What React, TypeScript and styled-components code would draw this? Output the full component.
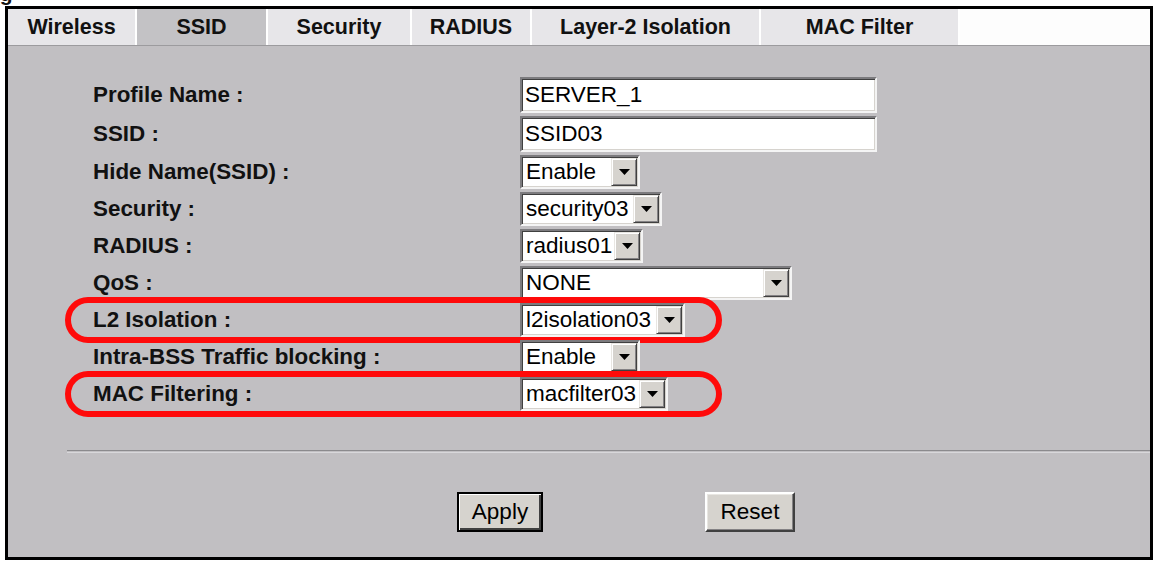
import React from 'react';
import styled, { createGlobalStyle, css } from 'styled-components';

const GlobalStyle = createGlobalStyle`
  html, body {
    margin: 0;
    padding: 0;
    background: #ffffff;
    font-family: 'Liberation Sans', Arial, sans-serif;
  }
`;

const Caption = styled.div`
  height: 6px;
  overflow: hidden;
  font: bold 21px/21px 'Liberation Sans', Arial, sans-serif;
  color: #111;
`;

const CaptionText = styled.div`
  margin: -17px 0 0 -19px;
  white-space: nowrap;
`;

const Frame = styled.div`
  box-sizing: border-box;
  margin-left: 5px;
  width: 1148px;
  height: 554px;
  border: 3px solid #000;
  display: flex;
  flex-direction: column;
  background: #c1bfc2;
`;

const TabBar = styled.div`
  display: flex;
  height: 36px;
  border-bottom: 1px solid #9c9b9e;
  background: #fdfdfd;
`;

const Tab = styled.div<{ $width: number; $active?: boolean }>`
  box-sizing: border-box;
  width: ${(p) => p.$width}px;
  display: flex;
  align-items: center;
  justify-content: center;
  border-right: 2px solid #ffffff;
  background: ${(p) => (p.$active ? '#c3c2c5' : '#e7e6e9')};
  font: bold 21.5px 'Liberation Sans', Arial, sans-serif;
  color: #111;
  white-space: nowrap;
`;

const Panel = styled.div`
  flex: 1;
  display: flex;
  flex-direction: column;
`;

const Form = styled.div`
  display: flex;
  flex-direction: column;
  gap: 3px;
  padding: 31px 0 0 85px;
`;

const highlight = css`
  &::after {
    content: '';
    position: absolute;
    left: -28px;
    top: -6px;
    width: 657px;
    height: 46px;
    box-sizing: border-box;
    border: 6px solid #ff0a0a;
    border-radius: 23px;
    pointer-events: none;
  }
`;

const Row = styled.div<{ $marked?: boolean }>`
  position: relative;
  display: grid;
  grid-template-columns: 427px auto;
  align-items: center;
  ${(p) => p.$marked && highlight}
`;

const Label = styled.div`
  font: bold 22.4px 'Liberation Sans', Arial, sans-serif;
  color: #111;
  white-space: nowrap;
`;

const TextField = styled.input`
  box-sizing: border-box;
  width: 357px;
  height: 36px;
  margin: 0;
  padding: 0 3px;
  border: 2px solid;
  border-color: #7c7b7e #f4f4f4 #f4f4f4 #7c7b7e;
  box-shadow: inset 1px 1px 0 #404040, inset -1px -1px 0 #d6d3ce;
  background: #fff;
  font: 22.5px 'Liberation Sans', Arial, sans-serif;
  color: #000;
  outline: none;
`;

const SelectBox = styled.div<{ $width: number }>`
  box-sizing: border-box;
  width: ${(p) => p.$width}px;
  height: 34px;
  display: flex;
  align-items: stretch;
  border: 2px solid;
  border-color: #7c7b7e #f4f4f4 #f4f4f4 #7c7b7e;
  box-shadow: inset 1px 1px 0 #404040, inset -1px -1px 0 #d6d3ce;
  background: #fff;
  padding: 1px;
`;

const SelectText = styled.div`
  flex: 1;
  display: flex;
  align-items: center;
  padding-left: 3px;
  font: 22.5px 'Liberation Sans', Arial, sans-serif;
  color: #000;
  white-space: nowrap;
  overflow: hidden;
`;

const ArrowButton = styled.div`
  box-sizing: border-box;
  width: 26px;
  display: flex;
  align-items: center;
  justify-content: center;
  background: #d6d3ce;
  border: 1px solid;
  border-color: #e8e6e2 #404040 #404040 #e8e6e2;
  box-shadow: inset 1px 1px 0 #ffffff, inset -1px -1px 0 #848284;
`;

const Divider = styled.div`
  margin: 39px 0 0 59px;
  height: 1px;
  border-top: 1px solid #8b8a8d;
  border-bottom: 1px solid #d8d7da;
`;

const ButtonRow = styled.div`
  display: flex;
  gap: 162px;
  padding: 39px 0 0 449px;
`;

const Button = styled.button<{ $width: number; $default?: boolean }>`
  box-sizing: border-box;
  width: ${(p) => p.$width}px;
  height: 40px;
  margin: 0;
  padding: 0;
  background: #d6d3ce;
  border: 2px solid;
  border-color: #ffffff #404040 #404040 #ffffff;
  box-shadow: inset -1px -1px 0 #848284, inset 1px 1px 0 #e8e6e2;
  font: 22.5px 'Liberation Sans', Arial, sans-serif;
  color: #000;
  ${(p) =>
    p.$default &&
    css`
      border: 2px solid #000;
      box-shadow: inset 1px 1px 0 #ffffff, inset -2px -2px 0 #404040;
    `}
`;

const Select: React.FC<{ width: number; value: string }> = ({ width, value }) => (
  <SelectBox $width={width}>
    <SelectText>{value}</SelectText>
    <ArrowButton>
      <svg width="11" height="6" viewBox="0 0 11 6">
        <polygon points="0,0 11,0 5.5,6" fill="#000" />
      </svg>
    </ArrowButton>
  </SelectBox>
);

const tabs = [
  { label: 'Wireless', width: 129 },
  { label: 'SSID', width: 131, active: true },
  { label: 'Security', width: 144 },
  { label: 'RADIUS', width: 120 },
  { label: 'Layer-2 Isolation', width: 229 },
  { label: 'MAC Filter', width: 199 },
];

const selects = [
  { label: 'Hide Name(SSID) :', value: 'Enable', width: 120 },
  { label: 'Security :', value: 'security03', width: 142 },
  { label: 'RADIUS :', value: 'radius01', width: 123 },
  { label: 'QoS :', value: 'NONE', width: 272 },
  { label: 'L2 Isolation :', value: 'l2isolation03', width: 165, marked: true },
  { label: 'Intra-BSS Traffic blocking :', value: 'Enable', width: 120 },
  { label: 'MAC Filtering :', value: 'macfilter03', width: 148, marked: true },
];

const App: React.FC = () => {
  return (
    <>
      <GlobalStyle />
      <Caption>
        <CaptionText>Fig</CaptionText>
      </Caption>
      <Frame>
        <TabBar>
          {tabs.map((t) => (
            <Tab key={t.label} $width={t.width} $active={t.active}>
              {t.label}
            </Tab>
          ))}
        </TabBar>
        <Panel>
          <Form>
            <Row>
              <Label>Profile Name :</Label>
              <TextField defaultValue="SERVER_1" />
            </Row>
            <Row>
              <Label>SSID :</Label>
              <TextField defaultValue="SSID03" />
            </Row>
            {selects.map((s) => (
              <Row key={s.label} $marked={s.marked}>
                <Label>{s.label}</Label>
                <div>
                  <Select width={s.width} value={s.value} />
                </div>
              </Row>
            ))}
          </Form>
          <Divider />
          <ButtonRow>
            <Button $width={86} $default>
              Apply
            </Button>
            <Button $width={90}>Reset</Button>
          </ButtonRow>
        </Panel>
      </Frame>
    </>
  );
};

export default App;
